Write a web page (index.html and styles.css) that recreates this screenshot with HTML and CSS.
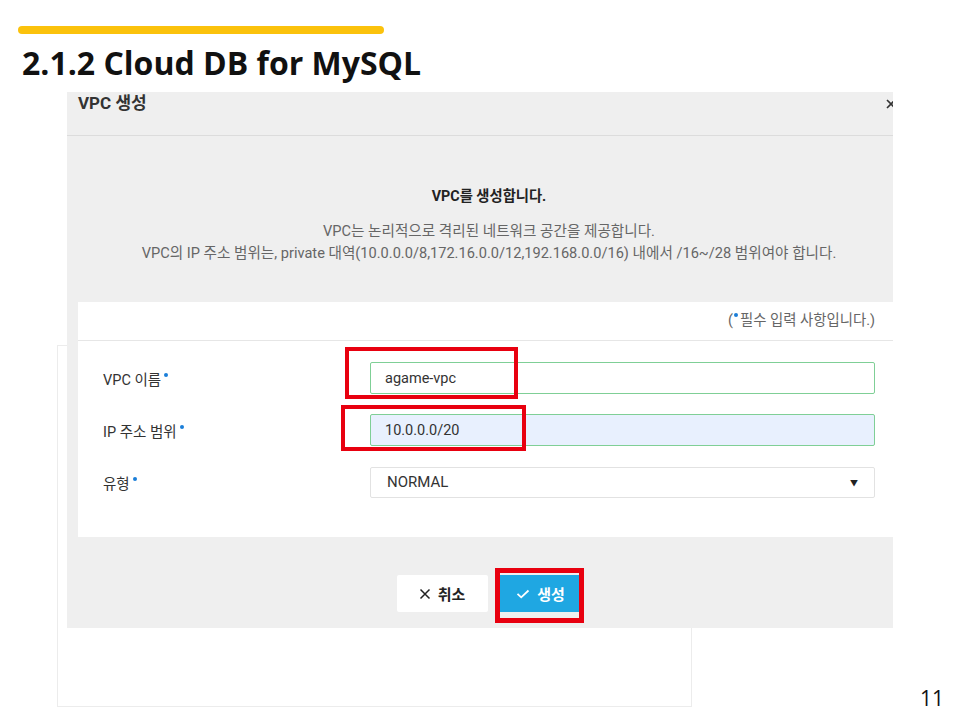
FILE: index.html
```html
<!DOCTYPE html>
<html>
<head>
  <title>2.1.2 Cloud DB for MySQL</title>
  <meta name="viewport" content="width=device-width, initial-scale=1" />
  <link rel="stylesheet" href="styles.css">
</head>
<body>
  <div class="slide">
    <div class="accent"></div>
    <h1 class="title">2.1.2 Cloud DB for MySQL</h1>

    <div class="shot">
      <div class="backdrop"></div>
      <div class="dialog">
        <div class="dialog-inner">
          <div class="dialog-head">
            <span>VPC 생성</span>
            <svg class="close" width="10" height="10" viewBox="0 0 10 10"><path d="M1 1L9 9M9 1L1 9" stroke="#333" stroke-width="1.6" fill="none"/></svg>
          </div>

          <div class="intro">
            <p class="intro-title">VPC를 생성합니다.</p>
            <p class="intro-desc">VPC는 논리적으로 격리된 네트워크 공간을 제공합니다.<br>VPC의 IP 주소 범위는, private 대역(10.0.0.0/8,172.16.0.0/12,192.168.0.0/16) 내에서 /16~/28 범위여야 합니다.</p>
          </div>

          <div class="panel">
            <div class="panel-note">(<i class="dot"></i>필수 입력 사항입니다.)</div>
            <div class="panel-body">
              <div class="row">
                <label>VPC 이름<i class="dot"></i></label>
                <div class="field valid">agame-vpc</div>
              </div>
              <div class="row">
                <label>IP 주소 범위<i class="dot"></i></label>
                <div class="field valid filled">10.0.0.0/20</div>
              </div>
              <div class="row">
                <label>유형<i class="dot"></i></label>
                <div class="field select">NORMAL <span class="caret">&#9660;</span></div>
              </div>
            </div>
          </div>

          <div class="actions">
            <button class="btn btn-cancel"><svg width="12" height="12" viewBox="0 0 12 12"><path d="M1.5 1.5L10.5 10.5M10.5 1.5L1.5 10.5" stroke="#222" stroke-width="1.5" fill="none"/></svg> 취소</button>
            <button class="btn btn-create"><svg width="14" height="10" viewBox="0 0 14 10"><path d="M1.5 4.8L5.2 8.3L12.5 1.5" stroke="#fff" stroke-width="1.8" fill="none"/></svg> 생성</button>
          </div>
        </div>
      </div>

      <div class="mark mark-name"></div>
      <div class="mark mark-ip"></div>
      <div class="mark mark-create"></div>
    </div>

    <div class="page-no">11</div>
  </div>
</body>
</html>
```

FILE: styles.css
```css
body { margin: 0; background: #fff; font-family: Roboto, "Noto Sans CJK KR", sans-serif; }
.slide { width: 960px; height: 720px; overflow: hidden; }

.accent { margin: 26px 0 0 18px; width: 366px; height: 8px; border-radius: 4px; background: #fbc20c; }
.title { margin: 9px 0 0 22px; font: bold 32px/40px "Open Sans", "Noto Sans CJK KR", sans-serif; color: #111; }

.shot { position: relative; margin: 9px 0 0 67px; width: 826px; height: 536px; }
.backdrop { position: absolute; left: -10px; top: 253px; width: 633px; height: 360px; border: 1px solid #ececec; background: #fff; }
.dialog { position: relative; height: 536px; overflow: hidden; background: #efefef; }
.dialog-inner { width: 833px; }

.dialog-head { display: flex; justify-content: space-between; align-items: flex-start; height: 43px; padding: 0 4px 0 11px; border-bottom: 1px solid #dcdcdc; font-size: 17px; font-weight: bold; line-height: 23px; color: #333; }
.close { margin-top: 7px; }

.intro { margin-left: 11px; width: 822px; padding: 50px 0 38px; text-align: center; }
.intro p { margin: 0; }
.intro-title { font-size: 14.3px; font-weight: bold; line-height: 20px; color: #222; }
.intro-desc { margin-top: 14px !important; font-size: 14.6px; line-height: 22px; color: #666; }

.panel { margin-left: 11px; width: 822px; background: #fff; }
.panel-note { height: 38px; padding: 0 25px; border-bottom: 1px solid #e6e6e6; font-size: 14.4px; line-height: 38px; color: #666; text-align: right; }
.panel-body { display: flex; flex-direction: column; gap: 20px; padding: 21px 25px 39px; }
.row { display: flex; align-items: center; height: 32px; }
.row label { width: 267px; font-size: 14.5px; color: #333; }
.dot { display: inline-block; width: 4px; height: 4px; margin-left: 3px; border-radius: 50%; background: #1a7ed8; vertical-align: 8px; }
.panel-note .dot { margin: 0 2px 0 1px; }

.field { display: flex; align-items: center; flex: 1; height: 100%; box-sizing: border-box; padding: 0 14px; border: 1px solid #e2e2e2; border-radius: 2px; background: #fff; font-size: 14.5px; color: #333; }
.field.valid { border-color: #7fcf96; }
.field.filled { background: #e8f0fe; }
.field.select { justify-content: space-between; padding: 0 16px 0 16px; height: 31px; font-size: 15px; }
.caret { font-size: 8px; color: #222; }

.actions { display: flex; justify-content: center; gap: 8px; margin-left: 11px; width: 822px; padding-top: 38px; }
.btn { height: 37px; border: 0; font: bold 15px Roboto, "Noto Sans CJK KR", sans-serif; display: flex; align-items: center; justify-content: center; gap: 7px; }
.btn-cancel { width: 91px; background: #fff; color: #222; border-radius: 2px; }
.btn-create { width: 86px; background: #1fa7e2; color: #fff; border-left: 4px solid #56819e; }

.mark { position: absolute; border: 4px solid #e8000f; }
.mark-name { left: 278px; top: 255px; width: 165px; height: 44px; }
.mark-ip { left: 274px; top: 313px; width: 177px; height: 38px; }
.mark-create { left: 428px; top: 476px; width: 79px; height: 45px; border-width: 5px; }

.page-no { margin: 58px 16px 0 0; text-align: right; font: 21px/24px "Open Sans", sans-serif; color: #111; }
```
